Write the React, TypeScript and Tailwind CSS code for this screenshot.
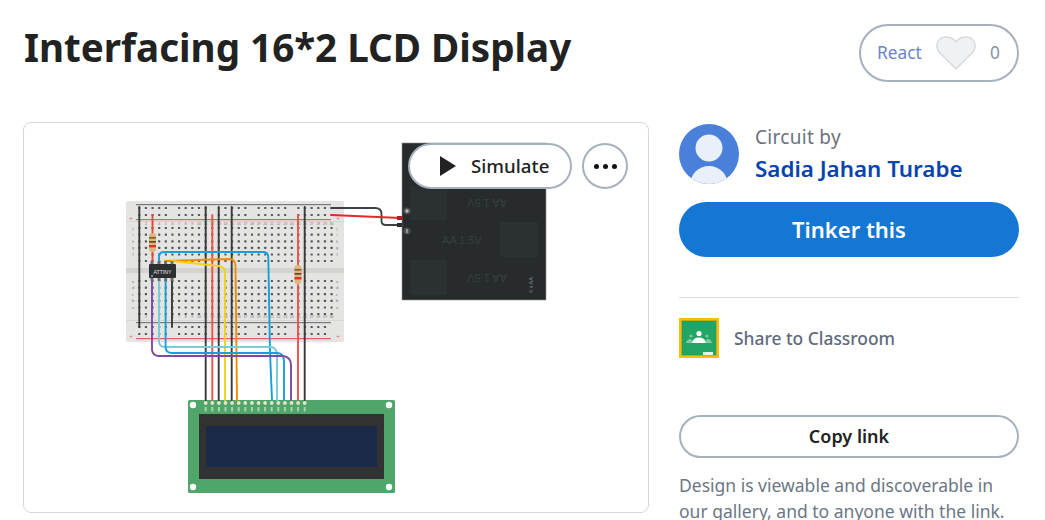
import React from "react";

const range = (n: number) => Array.from({ length: n }, (_, i) => i);
const P = 6.63;
const X0 = 139.3;

function Holes() {
  const rows = [228, 234.6, 241.3, 247.9, 254.5, 261, 281, 287.6, 294.2, 300.8, 307.5, 314];
  const rails = [208, 215, 327, 334];
  const c: React.ReactNode[] = [];
  rows.forEach((y) =>
    range(30).forEach((i) =>
      c.push(<rect key={`m${y}-${i}`} x={X0 + i * P - 1.1} y={y - 1.1} width={2.2} height={2.2} rx={0.5} fill="#55595a" />)
    )
  );
  rails.forEach((y) =>
    range(30).forEach((i) => {
      if (i % 6 === 5) return;
      c.push(<rect key={`r${y}-${i}`} x={X0 + i * P - 1.1} y={y - 1.1} width={2.2} height={2.2} rx={0.5} fill="#55595a" />);
    })
  );
  return <g>{c}</g>;
}

function Resistor({ x, y }: { x: number; y: number }) {
  return (
    <g>
      <rect x={x - 3.5} y={y} width={7} height={19} rx={3} fill="#d9b77e" />
      <rect x={x - 3.5} y={y + 4} width={7} height={1.6} fill="#8a5a2b" />
      <rect x={x - 3.5} y={y + 8} width={7} height={1.6} fill="#6b3f1d" />
      <rect x={x - 3.5} y={y + 12} width={7} height={2.4} fill="#e0312a" />
    </g>
  );
}

function Circuit() {
  const w = 1.9;
  return (
    <svg viewBox="24 123 624 389" className="block w-full h-full">
      {/* breadboard */}
      <rect x={126} y={201} width={218} height={141} rx={2} fill="#e4e4e3" />
      <rect x={126} y={221} width={218} height={1} fill="#d6d6d5" />
      <rect x={126} y={268} width={218} height={5} fill="#d3d3d2" />
      <rect x={126} y={320} width={218} height={1} fill="#d6d6d5" />
      <rect x={136} y={204} width={195} height={1.2} fill="#77797a" />
      <rect x={136} y={219} width={195} height={1.2} fill="#e0605c" />
      <rect x={136} y={322} width={195} height={1.2} fill="#77797a" />
      <rect x={136} y={338} width={195} height={1.2} fill="#e0605c" />
      <Holes />
      {range(30).map((i) => (
        <g key={i} fontSize={3.6} fill="#77797a" textAnchor="middle" fontFamily="Liberation Sans, sans-serif">
          <text x={X0 + i * P} y={225}>{i + 1}</text>
          <text x={X0 + i * P} y={318}>{i + 1}</text>
        </g>
      ))}
      {["j", "i", "h", "g", "f", "e", "d", "c", "b", "a"].map((l, i) => {
        const y = (i < 5 ? 229.5 + i * 6.62 : 282.5 + (i - 5) * 6.62);
        return (
          <g key={l} fontSize={4} fill="#77797a" textAnchor="middle" fontFamily="Liberation Sans, sans-serif">
            <text x={133} y={y}>{l}</text>
            <text x={337} y={y}>{l}</text>
          </g>
        );
      })}
      <g fontSize={6} fill="#e0605c" textAnchor="middle" fontFamily="Liberation Sans, sans-serif">
        <text x={131} y={220}>+</text>
        <text x={338} y={220}>+</text>
        <text x={131} y={338}>+</text>
        <text x={338} y={338}>+</text>
      </g>

      {/* LCD */}
      <rect x={188} y={400} width={207} height={93} rx={1.5} fill="#4fa56a" />
      <rect x={199} y={414} width={185} height={65} fill="#323232" />
      <rect x={206} y={426} width={171} height={41} fill="#1b2a49" />
      {[[193, 405], [389, 405], [193, 487], [389, 487]].map(([x, y]) => (
        <circle key={`${x}-${y}`} cx={x} cy={y} r={3.2} fill="#ffffff" />
      ))}
      {range(16).map((i) => (
        <g key={i}>
          <circle cx={205.7 + i * 6.6} cy={403} r={1.9} fill="#e7e3c8" />
          <rect x={204.7 + i * 6.6} y={407} width={2} height={4.5} fill="#a7d0b4" />
        </g>
      ))}

      {/* battery */}
      <rect x={402} y={143} width={144} height={157} fill="#272b2c" stroke="#8c8f90" strokeWidth={0.6} />
      <rect x={410} y={186} width={37} height={34} fill="#2b3131" />
      <rect x={500} y={222} width={38} height={35} fill="#2b3131" />
      <rect x={410} y={260} width={37} height={35} fill="#2b3131" />
      <g fontSize={11} fill="#383e3e" fontFamily="Liberation Sans, sans-serif" textAnchor="middle">
        <text x={487} y={207} transform="rotate(180 487 203)">AA 1.5V</text>
        <text x={462} y={244}>AA 1.5V</text>
        <text x={487} y={282} transform="rotate(180 487 278)">AA 1.5V</text>
      </g>
      <text x={533} y={285} fontSize={5.5} fill="#7e8384" textAnchor="middle" transform="rotate(-90 533 285)" fontFamily="Liberation Sans, sans-serif">4 x AA</text>
      <circle cx={407} cy={211} r={3.6} fill="#4a4f50" />
      <circle cx={407} cy={231} r={3.6} fill="#4a4f50" />
      <path d="M405 211h4M407 209v4M407 229v4" stroke="#d6d6d6" strokeWidth={1} />

      {/* wires */}
      <g fill="none" strokeWidth={w} strokeLinejoin="round" strokeLinecap="round">
        <path d="M139.3 207V327" stroke="#3a3a3a" />
        <path d="M152.5 215V233M152.5 252V261" stroke="#e8463f" />
        <path d="M205.7 207V400" stroke="#3a3a3a" />
        <path d="M212.3 215V400" stroke="#f0504c" />
        <path d="M218.7 207V400" stroke="#3a3a3a" />
        <path d="M231.7 207V400" stroke="#3a3a3a" />
        <path d="M298 215V265M298 285V400" stroke="#f0504c" />
        <path d="M304.7 207V400" stroke="#3a3a3a" />
        <path d="M172 281V327" stroke="#3a3a3a" />
        <path d="M159 261V257Q159 252 164 252H263Q268 252 268.3 257L270 352L272 400" stroke="#17a0d8" />
        <path d="M165.6 261L229 259Q235.5 259 235.5 266L237 400" stroke="#f08c00" />
        <path d="M172 261L219 266Q225 267 225 273V400" stroke="#f8cf1a" />
        <path d="M159 281V341Q159 347 165 347H272Q276 348 277 354V400" stroke="#7cc9d8" />
        <path d="M165.6 281V347Q165.6 353 172 353H278Q284 354 284 361V400" stroke="#17a0d8" />
        <path d="M152 281V350Q153 356 159 356H283Q291 357 291 365V400" stroke="#7d4aa3" />
        <path d="M331 208H375Q381.5 208 381.5 214V221Q381.5 225 386 225H402" stroke="#3f4244" />
        <path d="M331 215L401 218" stroke="#e8262a" />
      </g>
      <rect x={397} y={216} width={5} height={4} fill="#b01c22" />
      <rect x={397} y={223} width={5} height={4} fill="#2c2c2c" />

      <Resistor x={152.5} y={233} />
      <Resistor x={298} y={265} />

      {/* chip */}
      <g fill="#6c6e70">
        {[152, 159, 165.6, 172].map((x) => (
          <g key={x}>
            <rect x={x - 1.5} y={261} width={3} height={3} />
            <rect x={x - 1.5} y={278} width={3} height={3} />
          </g>
        ))}
      </g>
      <rect x={149} y={264} width={27} height={14} rx={1} fill="#2d2f31" />
      <text x={162.5} y={273.5} fontSize={5.2} fill="#e6e6e6" textAnchor="middle" fontFamily="Liberation Sans, sans-serif">ATTINY</text>
      <circle cx={152} cy={276} r={0.8} fill="#ffffff" />
    </svg>
  );
}

function ClassroomIcon() {
  return (
    <svg viewBox="0 0 40 40" className="block w-[40px] h-[40px]">
      <rect width={40} height={40} fill="#fbbc04" />
      <rect x={3} y={3} width={34} height={34} fill="#23a566" />
      <rect x={3} y={3} width={34} height={34} fill="none" stroke="#1a9457" strokeWidth={0.6} />
      <circle cx={12} cy={18} r={1.6} fill="#7fcba5" />
      <circle cx={28} cy={18} r={1.6} fill="#7fcba5" />
      <path d="M7 25Q8 21 12 21L14 25ZM33 25Q32 21 28 21L26 25Z" fill="#7fcba5" />
      <circle cx={20} cy={15.5} r={2.6} fill="#ffffff" />
      <path d="M13 25Q14 19.5 20 19.5T27 25Z" fill="#ffffff" />
      <rect x={24} y={34} width={10} height={3} fill="#e8f3ec" />
    </svg>
  );
}

export default function App() {
  return (
    <div className="w-[1045px] h-[520px] overflow-hidden bg-white font-['Noto_Sans',sans-serif]">
      <div className="flex items-start justify-between pl-[24px] pr-[26px] pt-[24px] h-[122px]">
        <h1 className="text-[38.6px] leading-[46px] font-bold text-[#222222]">Interfacing 16*2 LCD Display</h1>
        <div className="flex items-center w-[160px] h-[58px] rounded-full border-2 border-[#a7b0bd] pl-[16px]">
          <span className="text-[17.3px] text-[#6a84cf] w-[58px]">React</span>
          <svg viewBox="0 0 42 36" className="w-[42px] h-[36px]">
            <path d="M21 34L4 17C-1 10 4 2 11 2C15 2 19 4 21 7C23 4 27 2 31 2C38 2 43 10 38 17Z" fill="#f0f1f3" stroke="#d8dade" strokeWidth={1.5} strokeLinejoin="round" />
          </svg>
          <span className="ml-[13px] text-[17.3px] text-[#8a94a6]">0</span>
        </div>
      </div>
      <div className="flex items-start gap-[30px] pl-[23px]">
        <div className="relative w-[626px] h-[391px] rounded-[8px] border border-[#d4d7dc] overflow-hidden shrink-0">
          <Circuit />
          <div className="absolute left-[384px] top-[20px] flex items-center gap-[10px]">
            <button className="flex items-center w-[164px] h-[46px] rounded-full border-2 border-[#a7b0bd] bg-white pl-[30px]">
              <svg viewBox="0 0 16 20" className="w-[16px] h-[20px]">
                <path d="M0 0L16 10L0 20Z" fill="#222222" />
              </svg>
              <span className="ml-[15px] text-[18.7px] font-medium text-[#222222]">Simulate</span>
            </button>
            <button className="flex items-center justify-center gap-[4px] w-[46px] h-[46px] rounded-full border-2 border-[#a7b0bd] bg-white">
              <span className="w-[5px] h-[5px] rounded-full bg-[#111111]" />
              <span className="w-[5px] h-[5px] rounded-full bg-[#111111]" />
              <span className="w-[5px] h-[5px] rounded-full bg-[#111111]" />
            </button>
          </div>
        </div>
        <div className="w-[340px] shrink-0 pt-[2px]">
          <div className="flex items-start gap-[16px]">
            <svg viewBox="0 0 60 60" className="w-[60px] h-[60px] rounded-full shrink-0">
              <rect width={60} height={60} fill="#4a80d9" />
              <circle cx={30} cy={24} r={13.5} fill="#e9f0fa" />
              <ellipse cx={30} cy={61} rx={19} ry={19} fill="#e9f0fa" />
            </svg>
            <div>
              <div className="text-[19px] tracking-[0.3px] leading-[26px] text-[#6b7280] mt-[0px]">Circuit by</div>
              <div className="text-[22.4px] leading-[30px] font-semibold text-[#0645ad] mt-[4px]">Sadia Jahan Turabe</div>
            </div>
          </div>
          <button className="block w-full h-[55px] mt-[18px] rounded-full bg-[#1477d4] text-white text-[22px] font-semibold">Tinker this</button>
          <div className="h-px bg-[#dddddd] mt-[40px]" />
          <div className="flex items-center gap-[15px] mt-[20px]">
            <ClassroomIcon />
            <span className="text-[17.4px] font-medium text-[#5f6b7d]">Share to Classroom</span>
          </div>
          <button className="block w-full h-[43px] mt-[57px] rounded-full border-2 border-[#a7b0bd] text-[18px] font-semibold text-[#222222]">Copy link</button>
          <p className="text-[17.5px] leading-[26px] text-[#6b7785] mt-[14px]">Design is viewable and discoverable in our gallery, and to anyone with the link.</p>
        </div>
      </div>
    </div>
  );
}
